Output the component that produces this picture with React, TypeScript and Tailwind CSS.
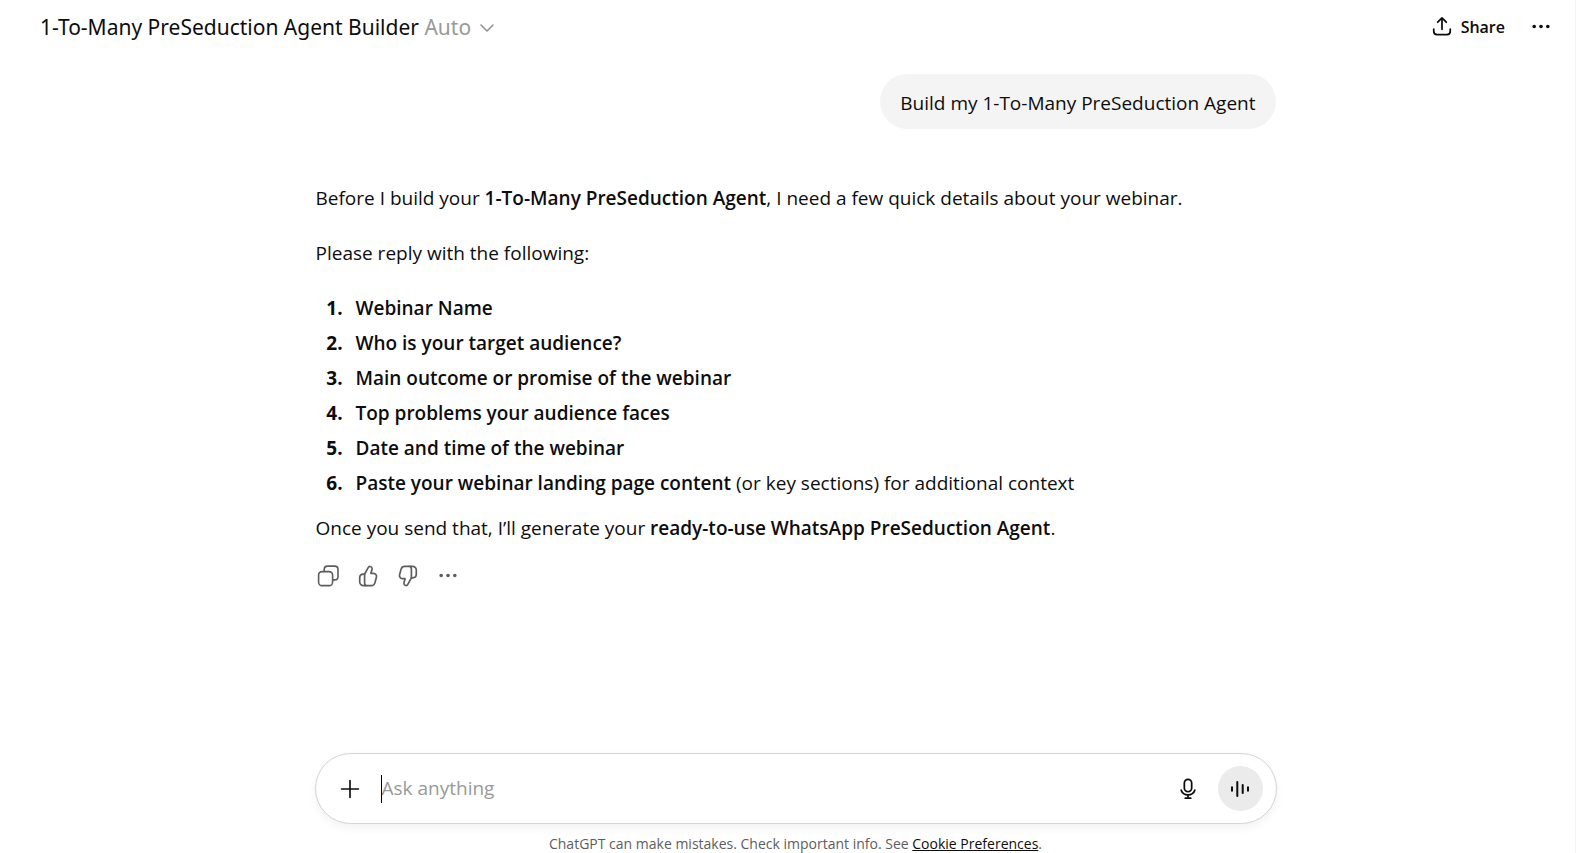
import type { ReactNode } from "react";

const questions: { title: string; note?: string }[] = [
  { title: "Webinar Name" },
  { title: "Who is your target audience?" },
  { title: "Main outcome or promise of the webinar" },
  { title: "Top problems your audience faces" },
  { title: "Date and time of the webinar" },
  {
    title: "Paste your webinar landing page content",
    note: "(or key sections) for additional context",
  },
];

function Icon({ children, className }: { children: ReactNode; className: string }) {
  return (
    <svg
      viewBox="0 0 24 24"
      fill="none"
      stroke="currentColor"
      strokeLinecap="round"
      strokeLinejoin="round"
      aria-hidden="true"
      className={className}
    >
      {children}
    </svg>
  );
}

function Dots() {
  return (
    <Icon className="size-6 stroke-none">
      <circle cx="5.2" cy="11.5" r="1.8" fill="currentColor" />
      <circle cx="12" cy="11.5" r="1.8" fill="currentColor" />
      <circle cx="18.8" cy="11.5" r="1.8" fill="currentColor" />
    </Icon>
  );
}

const thumb = (
  <>
    <path d="M8.600 10.200 12.200 3.600c.5-.9 1.200-1.300 2-1.100 1.400.3 2.200 1.600 1.800 3L14.900 9.300h2.300c2.300 0 3.800 1.900 3.200 4l-1.500 5.600c-.5 1.800-1.800 2.800-3.600 2.800H7.600c-2.200 0-3.900-1.700-3.900-3.900v-3.900c0-2.200 1.500-3.700 3.600-3.700h1.300Z" />
    <path d="M8.600 10.200v8.600c0 1.200.5 2.200 1.300 2.900" />
  </>
);

function Action({ label, children }: { label: string; children: ReactNode }) {
  return (
    <button
      type="button"
      aria-label={label}
      className="flex size-10 items-center justify-center rounded-lg hover:bg-gray-100"
    >
      {children}
    </button>
  );
}

function Header() {
  return (
    <header className="flex h-14 shrink-0 items-center justify-between pr-[14px] pl-6">
      <button
        type="button"
        className="flex items-center gap-2 font-['Noto_Sans','Open_Sans',sans-serif] text-[21px]"
      >
        <span>
          1-To-Many PreSeduction Agent Builder <span className="text-[#999999]">Auto</span>
        </span>
        <Icon className="size-4 text-[#8f8f8f]">
          <path d="m3 7.500 9 9 9-9" strokeWidth="2.2" />
        </Icon>
      </button>
      <div className="flex items-center gap-4 pb-0.5">
        <button type="button" className="flex items-center gap-2 text-base font-semibold">
          <Icon className="size-[22px]">
            <path
              d="M12 14.500V2.200M7.300 6.800 12 2.100l4.700 4.700M3 14.200v2.400c0 2.300 1.300 3.600 3.600 3.600h10.800c2.300 0 3.600-1.300 3.600-3.600v-2.400"
              strokeWidth="1.9"
            />
          </Icon>
          Share
        </button>
        <Action label="More options">
          <Dots />
        </Action>
      </div>
    </header>
  );
}

function Conversation() {
  return (
    <main className="mx-auto w-full max-w-[960px] flex-1 text-[19px] leading-[35px]">
      <div className="mt-[18px] flex justify-end">
        <p className="rounded-full bg-[#f4f4f4] px-5 pt-3 pb-2">
          Build my 1-To-Many PreSeduction Agent
        </p>
      </div>

      <article className="mt-[52px]">
        <p>
          Before I build your{" "}
          <strong className="font-semibold">1-To-Many PreSeduction Agent</strong>, I need a few
          quick details about your webinar.
        </p>
        <p className="mt-5">Please reply with the following:</p>
        <ol className="mt-5 mb-[10px] list-decimal pl-8 marker:font-bold">
          {questions.map((q) => (
            <li key={q.title} className="pl-2">
              <strong className="font-semibold">{q.title}</strong>
              {q.note && ` ${q.note}`}
            </li>
          ))}
        </ol>
        <p>
          Once you send that, I’ll generate your{" "}
          <strong className="font-semibold">ready-to-use WhatsApp PreSeduction Agent</strong>.
        </p>
      </article>

      <div className="mt-[10px] -ml-2 flex text-[#5d5d5d]">
        <Action label="Copy">
          <Icon className="size-6">
            <rect x="2.600" y="7.600" width="14" height="14" rx="3.400" strokeWidth="1.6" />
            <path
              d="M8.200 7.400V5.500c0-2 1.400-3.400 3.400-3.400h7c2 0 3.400 1.400 3.400 3.400v7c0 2-1.400 3.400-3.400 3.400h-1.800"
              strokeWidth="1.6"
            />
          </Icon>
        </Action>
        <Action label="Good response">
          <Icon className="size-6 stroke-[1.7]">{thumb}</Icon>
        </Action>
        <Action label="Bad response">
          <Icon className="size-6 rotate-180 stroke-[1.7]">{thumb}</Icon>
        </Action>
        <Action label="More actions">
          <Dots />
        </Action>
      </div>
    </main>
  );
}

function Composer() {
  return (
    <form className="mx-auto flex h-[71px] w-full max-w-[962px] items-center rounded-full border border-[#d4d4d4] bg-white pr-[13px] pl-[14px] shadow-[0_4px_10px_rgba(0,0,0,0.05)]">
      <Action label="Add files">
        <Icon className="size-[22px]">
          <path d="M12 2.800v18.400M2.800 12h18.400" strokeWidth="1.800" />
        </Icon>
      </Action>
      {/* Caret */}
      <span className="ml-[11px] h-7 w-px bg-black" />
      <input
        type="text"
        aria-label="Ask anything"
        placeholder="Ask anything"
        className="min-w-0 flex-1 text-[19px] outline-none placeholder:text-[#999999]"
      />
      <Action label="Dictate">
        <Icon className="size-[22px]">
          <rect x="8" y="1.500" width="8" height="13.500" rx="4" strokeWidth="1.900" />
          <path d="M4.500 13.200c.9 3 3.900 5.300 7.500 5.300s6.600-2.300 7.500-5.300M12 18.500V22M9 22h6" strokeWidth="1.900" />
        </Icon>
      </Action>
      <button
        type="button"
        aria-label="Use voice mode"
        className="ml-[10px] flex size-[45px] items-center justify-center rounded-full bg-[#ebebeb]"
      >
        <Icon className="size-6">
          <path d="M4 10.200v3.600M20 10.200v3.600" strokeWidth="2" />
          <path d="M9.300 5v14M14.700 8v8" strokeWidth="2" />
        </Icon>
      </button>
    </form>
  );
}

export default function App() {
  return (
    <div className="flex min-h-screen flex-col border-r border-[#f2f2f2] bg-white pl-4 font-['Open_Sans','Noto_Sans',sans-serif] text-[#0d0d0d]">
      <Header />
      <Conversation />
      <Composer />
      <footer className="flex h-[29px] items-end justify-center text-[14px] leading-[18px] text-[#5d5d5d]">
        <p>
          ChatGPT can make mistakes. Check important info. See{" "}
          <a href="#cookies" className="text-[#0d0d0d] underline">
            Cookie Preferences
          </a>
          .
        </p>
      </footer>
    </div>
  );
}
